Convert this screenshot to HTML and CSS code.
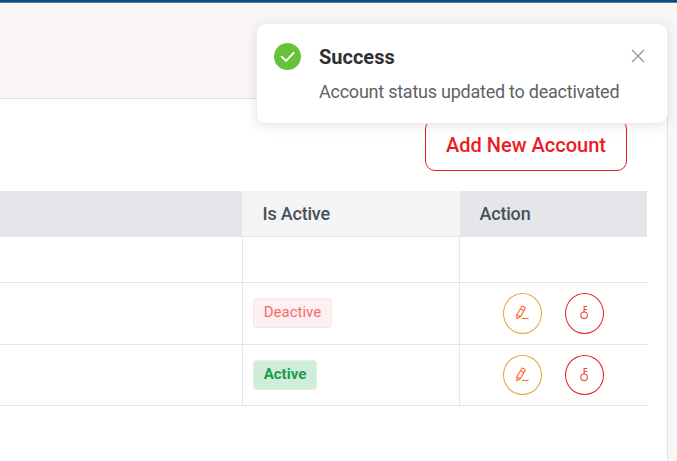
FILE: index.html
```html
<!DOCTYPE html>
<html lang="en">
<head>
<meta charset="utf-8">
<title>Accounts</title>
<link rel="stylesheet" href="styles.css">
</head>
<body>
<svg class="sprite" aria-hidden="true">
  <symbol id="pencil" viewBox="-.5 -.5 17 17">
    <path d="M2.300 9.200 7.200 1q.4-.7 1.100-.3l2.100 1.200q.7.4.3 1.100L5.800 11.300 2.300 13.200ZM5.900 3.200 9.500 5.300M2.300 9.200 5.800 11.300"/>
    <path class="line" d="M7.500 13h6.600"/>
  </symbol>
  <symbol id="key" viewBox="-.5 -.5 17 17">
    <circle cx="7.600" cy="9.800" r="3.300"/>
    <path d="M7.600 6.500V1h3M7.600 4h3"/>
  </symbol>
</svg>
<div class="topbar"></div>
<main class="card">
  <div class="toolbar"><button class="add">Add New Account</button></div>
  <table class="accounts">
    <colgroup><col class="c-name"><col class="c-active"><col class="c-action"></colgroup>
    <thead><tr><th></th><th class="current">Is Active</th><th>Action</th></tr></thead>
    <tbody>
      <tr class="filter"><td></td><td></td><td></td></tr>
      <tr class="first"><td></td><td><span class="tag off">Deactive</span></td>
        <td><div class="actions"><button class="round edit"><svg><use href="#pencil"/></svg></button><button class="round reset"><svg><use href="#key"/></svg></button></div></td></tr>
      <tr class="second"><td></td><td><span class="tag on">Active</span></td>
        <td><div class="actions"><button class="round edit"><svg><use href="#pencil"/></svg></button><button class="round reset"><svg><use href="#key"/></svg></button></div></td></tr>
    </tbody>
  </table>
</main>
<div class="toast" role="alert">
  <svg class="ok" viewBox="0 0 27 27"><circle cx="13.500" cy="13.500" r="13.500"/><path d="m7.700 13.600 4.300 4.300 7.700-8"/></svg>
  <div class="message"><h2>Success</h2><p>Account status updated to deactivated</p></div>
  <svg class="close" viewBox="0 0 14 14"><path d="m1 1 12 12M13 1 1 13"/></svg>
</div>
</body>
</html>
```
FILE: styles.css
```css
* { box-sizing: border-box; }
body {
  margin: 0;
  height: 461px;
  overflow: hidden;
  background: #faf6f5;
  font-family: Roboto, sans-serif;
}
.sprite { display: none; }
.topbar { height: 3px; background: #0d4c7c; border-bottom: 1px solid #4980a5; }
.card {
  width: 668px;
  height: 363px;
  margin-top: 95px;
  padding-right: 20px;
  background: #fff;
  border: solid #e2e3ea;
  border-width: 1px 1px 0 0;
}
.toolbar { display: flex; justify-content: flex-end; padding: 20px 20px 20px 0; }
.add {
  width: 202px;
  height: 52px;
  padding: 0;
  border: 1px solid #ed1c24;
  border-radius: 10px;
  background: #fff;
  color: #ed1c24;
  font: 500 20px/50px Roboto, sans-serif;
}
.accounts { width: 647px; table-layout: fixed; border-collapse: separate; border-spacing: 0; }
.c-name { width: 242px; }
.c-active { width: 218px; }
.c-action { width: 187px; }
th {
  height: 46px;
  padding: 0 20px;
  background: #e5e6ea;
  border-bottom: 1px solid #e5e6ea;
  color: #495057;
  font-size: 18px;
  font-weight: 500;
  letter-spacing: -.2px;
  text-align: left;
}
th.current { background: #f3f4f6; padding-left: 20.500px; }
th:last-child { padding-left: 19.500px; }
td { padding: 0; border-bottom: 1px solid #e4e5e9; vertical-align: middle; }
td:nth-child(2) { padding-left: 10px; border-left: 1px solid #e4e5e9; border-right: 1px solid #e4e5e9; }
.filter td { height: 46px; }
.first td { height: 62px; }
.first td:nth-child(2) { padding-bottom: 1px; }
.second td { height: 61px; }
.tag {
  display: block;
  height: 30px;
  border: 1px solid;
  border-radius: 4px;
  font-size: 15px;
  line-height: 27px;
  text-align: center;
}
.off { width: 79px; background: #feeff0; border-color: #fde2e2; color: #f56c6c; }
.on { width: 64px; background: #d0ecdb; border-color: #e1f3d8; color: #219c4c; font-weight: 700; }
.actions { display: flex; gap: 23px; padding-left: 43px; }
.round {
  display: grid;
  place-items: center;
  width: 39px;
  height: 41px;
  padding: 0;
  border: 1px solid #e6a23c;
  border-radius: 50%;
  background: #fff;
}
.second .round { height: 40px; }
.round svg { width: 17px; height: 17px; fill: none; stroke: #ff6a35; stroke-width: 1.1; }
.round .line { stroke: #ff5a17; }
.reset { border-color: #ed1c24; }
.reset svg { stroke: #f0483f; }
.toast {
  position: absolute;
  top: 23px;
  left: 256px;
  display: flex;
  align-items: flex-start;
  width: 412px;
  height: 101px;
  padding: 20px 22px 0 17px;
  border: 1px solid #ebeef5;
  border-radius: 10px;
  background: #fff;
  box-shadow: 0 2px 14px rgba(0, 0, 0, .1);
}
.ok { width: 27px; height: 27px; margin-top: -1px; flex: none; fill: #67c23a; }
.ok path { fill: none; stroke: #fff; stroke-width: 2; stroke-linecap: round; stroke-linejoin: round; }
.message { flex: 1; margin-left: 18px; white-space: nowrap; }
.message h2 { margin: 0; color: #303133; font-size: 20px; line-height: 26px; font-weight: 700; }
.message p { margin: 9px 0 0; color: #606266; font-size: 18px; line-height: 26px; letter-spacing: -.24px; }
.close { width: 14px; height: 14px; margin-top: 5px; fill: none; stroke: #909399; stroke-width: 1.2; }
```
